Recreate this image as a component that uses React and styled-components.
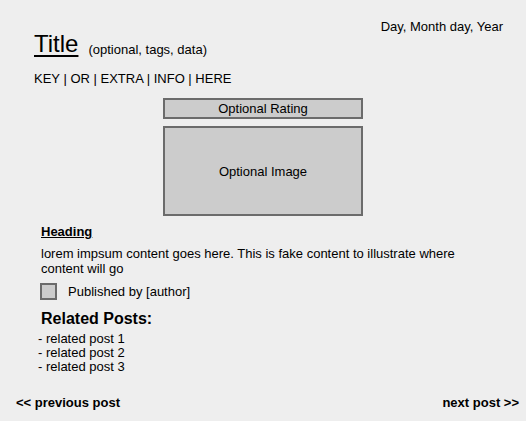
import React from 'react';
import styled, { createGlobalStyle } from 'styled-components';

const GlobalStyle = createGlobalStyle`
  html, body {
    margin: 0;
    padding: 0;
    background: #ffffff;
  }
  body {
    font-family: "Liberation Sans", Arial, sans-serif;
    color: #000;
  }
`;

const Page = styled.div`
  width: 526px;
  height: 421px;
  background: #eeeeee;
  box-sizing: border-box;
  display: flex;
  flex-direction: column;
  font-size: 13px;
`;

const TopRow = styled.div`
  display: flex;
  justify-content: space-between;
  align-items: flex-start;
  padding: 0 23px 0 34px;
`;

const TitleLine = styled.div`
  display: flex;
  align-items: baseline;
  gap: 10px;
  margin-top: 30px;
`;

const Title = styled.h1`
  margin: 0;
  font-size: 24px;
  font-weight: normal;
  text-decoration: underline;
  text-decoration-thickness: 2px;
  text-underline-offset: 3px;
  line-height: 28px;
`;

const Tags = styled.span`
  font-size: 13px;
  position: relative;
  top: 2px;
`;

const DateText = styled.div`
  margin-top: 19px;
  font-size: 13px;
`;

const KeyLine = styled.div`
  padding-left: 34px;
  margin-top: 13px;
  font-size: 13px;
  line-height: 15px;
`;

const Media = styled.div`
  display: flex;
  flex-direction: column;
  align-items: center;
  gap: 7px;
  margin: 12px 0 0 163px;
  width: 200px;
`;

const Placeholder = styled.div`
  box-sizing: border-box;
  width: 100%;
  height: ${(p) => p.$h}px;
  background: #cccccc;
  border: 2px solid #6b6b6b;
  display: flex;
  align-items: center;
  justify-content: center;
  font-size: 13px;
`;

const Body = styled.div`
  padding-left: 41px;
  margin-top: 8px;
`;

const Heading = styled.h2`
  margin: 0;
  font-size: 13px;
  font-weight: bold;
  text-decoration: underline;
  line-height: 16px;
`;

const Para = styled.p`
  margin: 6px 0 0;
  width: 420px;
  font-size: 13px;
  line-height: 15px;
`;

const Author = styled.div`
  display: flex;
  align-items: center;
  gap: 11px;
  margin-top: 7px;
  margin-left: -1px;
`;

const Box = styled.span`
  box-sizing: border-box;
  width: 17px;
  height: 17px;
  background: #cccccc;
  border: 2px solid #6b6b6b;
`;

const Related = styled.h3`
  margin: 9px 0 0;
  font-size: 16px;
  font-weight: bold;
  line-height: 20px;
`;

const RelatedList = styled.ul`
  list-style: none;
  margin: 3px 0 0 -3px;
  padding: 0;
  font-size: 13px;
  line-height: 14px;
`;

const Footer = styled.div`
  display: flex;
  justify-content: space-between;
  padding: 0 7px 0 16px;
  margin-top: 21px;
  font-size: 13px;
  font-weight: bold;
`;

export default function App() {
  return (
    <>
      <GlobalStyle />
      <Page>
        <TopRow>
          <TitleLine>
            <Title>Title</Title>
            <Tags>(optional, tags, data)</Tags>
          </TitleLine>
          <DateText>Day, Month day, Year</DateText>
        </TopRow>
        <KeyLine>KEY | OR | EXTRA | INFO | HERE</KeyLine>
        <Media>
          <Placeholder $h={21}>Optional Rating</Placeholder>
          <Placeholder $h={90}>Optional Image</Placeholder>
        </Media>
        <Body>
          <Heading>Heading</Heading>
          <Para>
            lorem impsum content goes here. This is fake content to illustrate where content will go
          </Para>
          <Author>
            <Box />
            <span>Published by [author]</span>
          </Author>
          <Related>Related Posts:</Related>
          <RelatedList>
            <li>- related post 1</li>
            <li>- related post 2</li>
            <li>- related post 3</li>
          </RelatedList>
        </Body>
        <Footer>
          <span>&lt;&lt; previous post</span>
          <span>next post &gt;&gt;</span>
        </Footer>
      </Page>
    </>
  );
}
